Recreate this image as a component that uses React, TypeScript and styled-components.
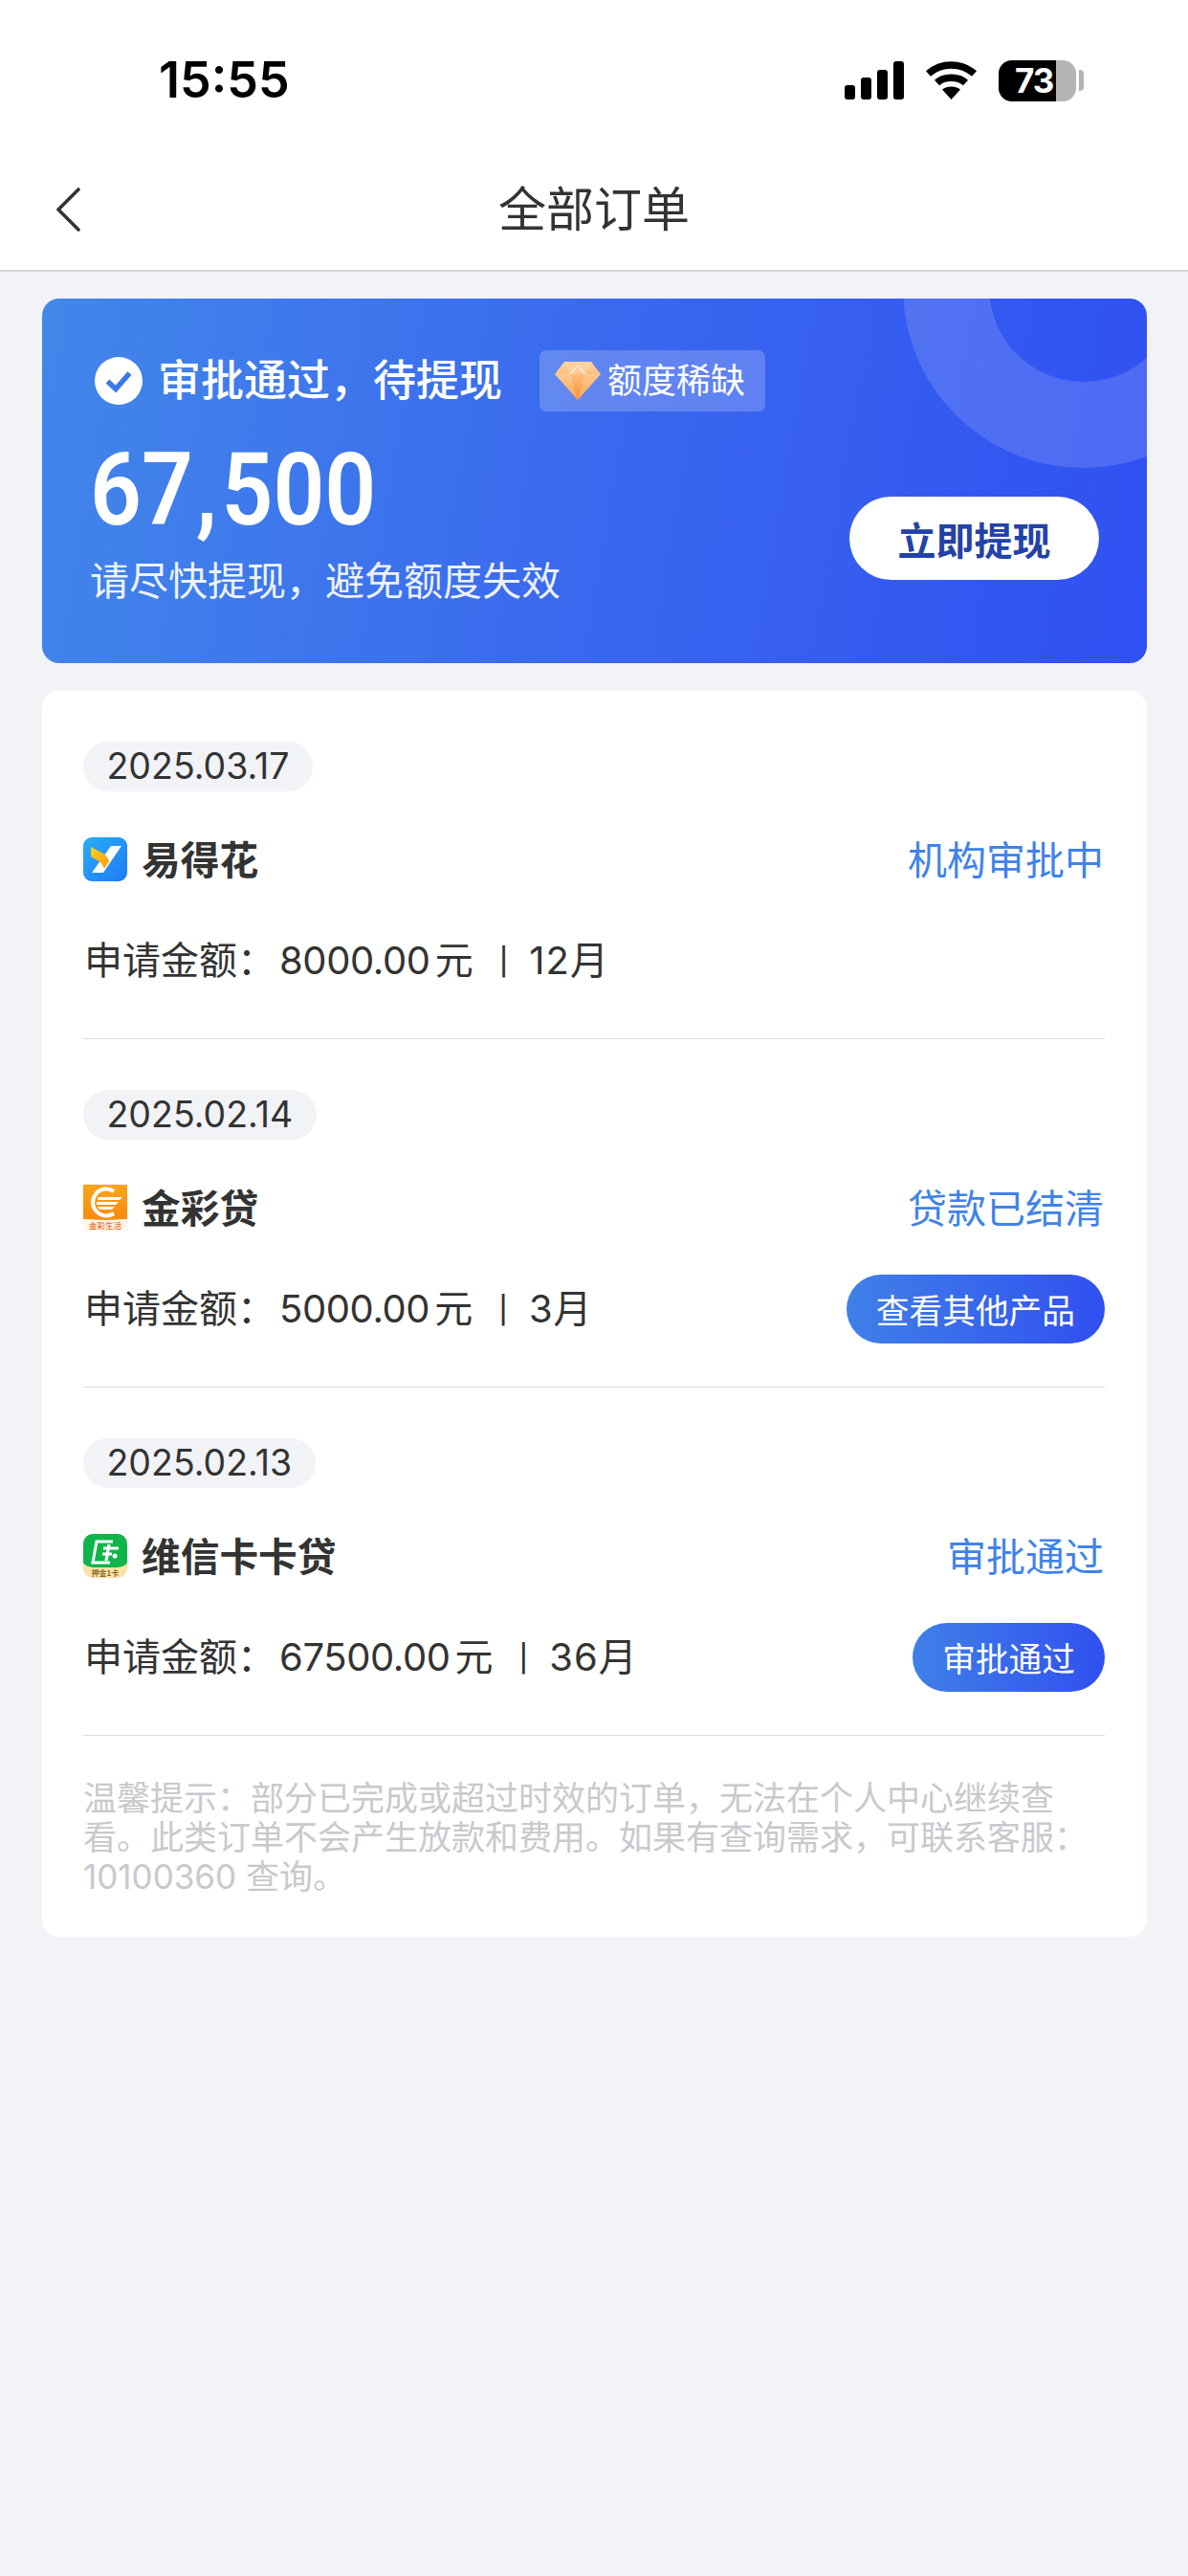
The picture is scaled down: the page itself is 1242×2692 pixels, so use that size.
import React from 'react';
import styled, { createGlobalStyle } from 'styled-components';

const Global = createGlobalStyle`
  html, body { margin: 0; padding: 0; background: #f2f3f7; }
  * { box-sizing: border-box; }
  body { font-family: Inter, "Noto Sans CJK SC", "Noto Sans", sans-serif; color: #333; }
`;

const Page = styled.div`
  width: 1242px;
  min-height: 2692px;
  background: #f2f3f7;
  overflow: hidden;
`;
const Top = styled.header`
  background: #fff;
  border-bottom: 2px solid #d4d4d6;
  height: 284px;
`;
const StatusBar = styled.div`
  height: 168px;
  display: flex;
  align-items: center;
  justify-content: space-between;
  padding: 0 109px 0 166px;
`;
const Time = styled.div`
  font-family: Inter, "Liberation Sans", sans-serif;
  font-weight: 600;
  font-size: 52px;
  line-height: 60px;
  color: #000;
`;
const StatusIcons = styled.div`
  display: flex;
  align-items: center;
  gap: 22px;
`;
const BatteryWrap = styled.div`
  display: flex;
  align-items: center;
  gap: 3px;
`;
const BatteryBody = styled.div`
  width: 81px;
  height: 43px;
  border-radius: 14px;
  background: linear-gradient(90deg, #000 74%, #b4b4b4 74%);
  color: #fff;
  font-family: Inter, "Liberation Sans", sans-serif;
  font-weight: 700;
  font-size: 35px;
  line-height: 43px;
  padding-left: 17px;
  letter-spacing: -1px;
`;
const BatteryCap = styled.div`
  width: 5px;
  height: 22px;
  border-radius: 0 4px 4px 0;
  background: #b4b4b4;
`;
const Nav = styled.nav`
  height: 114px;
  padding: 0 59px 12px;
  display: grid;
  grid-template-columns: 1fr auto 1fr;
  align-items: center;
`;
const NavTitle = styled.h1`
  margin: 0;
  font-size: 50px;
  line-height: 60px;
  font-weight: 400;
  color: #333;
`;
const Hero = styled.section`
  position: relative;
  margin: 28px 43px 0 44px;
  height: 381px;
  border-radius: 18px;
  overflow: hidden;
  background: linear-gradient(100deg, #4287ea 0%, #3a68ee 50%, #2f50f2 100%);
  display: flex;
  justify-content: space-between;
`;
const Ring = styled.div`
  position: absolute;
  width: 378px;
  height: 378px;
  top: -201px;
  right: -123px;
  border-radius: 50%;
  border: 90px solid rgba(255, 255, 255, 0.14);
`;
const HeroLeft = styled.div`
  position: relative;
  padding: 54px 0 0 50px;
`;
const HeroHead = styled.div`
  display: flex;
  align-items: center;
  margin-left: 5px;
  height: 64px;
`;
const HeroTitle = styled.div`
  margin-left: 16px;
  font-size: 45px;
  line-height: 60px;
  font-weight: 500;
  color: #fff;
`;
const Tag = styled.div`
  margin-left: 39px;
  height: 64px;
  padding: 0 21px 0 16px;
  border-radius: 7px;
  background: rgba(255, 255, 255, 0.2);
  display: flex;
  align-items: center;
  gap: 7px;
  color: #fff;
  font-size: 36px;
  line-height: 64px;
`;
const Amount = styled.div`
  margin-top: 33px;
  font-family: Roboto, "Liberation Sans", sans-serif;
  font-weight: 600;
  font-size: 105px;
  line-height: 100px;
  color: #fff;
  transform: scaleX(0.9);
  transform-origin: left center;
  white-space: nowrap;
`;
const AmountComma = styled.span`
  margin: 0 5px 0 3px;
`;
const HeroSub = styled.div`
  margin-top: 16px;
  font-size: 41px;
  line-height: 56px;
  color: rgba(255, 255, 255, 0.92);
`;
const Withdraw = styled.button`
  position: relative;
  align-self: flex-end;
  margin: 0 50px 87px 0;
  width: 261px;
  height: 87px;
  border: 0;
  border-radius: 44px;
  background: #fff;
  color: #2342a6;
  font-family: inherit;
  font-size: 40px;
  font-weight: 700;
  padding: 0;
`;
const Card = styled.section`
  margin: 29px 43px 0 44px;
  padding: 0 44px 42px 43px;
  background: #fff;
  border-radius: 18px;
`;
const Order = styled.article`
  padding: 53px 0 45px;
  border-bottom: 1px solid #dcdcdf;
`;
const DateChip = styled.div`
  display: inline-flex;
  align-items: center;
  height: 52px;
  padding: 0 24.5px 2px;
  border-radius: 26px;
  background: #f2f3f7;
  font-size: 37.5px;
  color: #333;
  vertical-align: top;
`;
const OrderHead = styled.div`
  margin-top: 41px;
  height: 60px;
  display: flex;
  align-items: center;
  justify-content: space-between;
`;
const Product = styled.div`
  display: flex;
  align-items: center;
  gap: 15px;
`;
const ProductName = styled.span`
  padding-bottom: 4px;
  font-size: 40.7px;
  font-weight: 700;
  color: #333;
`;
const OrderStatus = styled.div`
  padding: 0 1px 4px 0;
  font-size: 41px;
  color: #4083e9;
`;
const OrderBody = styled.div`
  margin-top: 40px;
  height: 72px;
  display: flex;
  align-items: center;
  justify-content: space-between;
`;
const Apply = styled.div`
  padding: 0 0 6px 1px;
  font-size: 40px;
  color: #333;
  white-space: pre;
`;
const Money = styled.span`
  margin-left: 4px;
  letter-spacing: -0.4px;
`;
const Unit = styled.span`
  margin-left: 5px;
`;
const Sep = styled.span`
  margin: 0 22px 0 27px;
  font-size: 28px;
  font-weight: 500;
  vertical-align: 3px;
`;
const Term = styled.span`
  letter-spacing: 1px;
`;
const ActionBtn = styled.button`
  height: 72px;
  padding: 0 31px;
  border: 0;
  border-radius: 36px;
  background: linear-gradient(90deg, #4080e8 0%, #3050f0 100%);
  color: #fff;
  font-family: inherit;
  font-size: 34.7px;
  white-space: nowrap;
`;
const Note = styled.p`
  margin: 45px 0 0;
  font-size: 35px;
  line-height: 41px;
  color: #c9c9cd;
`;

const Signal = () => (
  <svg width="62" height="40" viewBox="0 0 62 40">
    <rect x="0" y="25" width="11" height="15" rx="3" fill="#000" />
    <rect x="17" y="17" width="11" height="23" rx="3" fill="#000" />
    <rect x="34" y="9" width="11" height="31" rx="3" fill="#000" />
    <rect x="51" y="0" width="11" height="40" rx="3" fill="#000" />
  </svg>
);
const Wifi = () => (
  <svg width="55" height="40" viewBox="0 0 55 40" fill="none" stroke="#000" strokeWidth="7.5">
    <path d="M3.5 13 C17 1 38 1 51.5 13" />
    <path d="M12.5 22.5 C20 15.5 35 15.5 42.5 22.5" />
    <path d="M27.5 40 L18 29.5 C23 25.5 32 25.5 37 29.5 Z" fill="#000" stroke="none" />
  </svg>
);
const Back = () => (
  <svg width="25" height="46" viewBox="0 0 25 46" fill="none" stroke="#333" strokeWidth="3.6" strokeLinecap="round" strokeLinejoin="round">
    <path d="M23 2 L2 23 L23 44" />
  </svg>
);
const Check = () => (
  <svg width="50" height="50" viewBox="0 0 50 50">
    <circle cx="25" cy="25" r="25" fill="#fff" />
    <path d="M13.5 25.5 L22 33.5 L36.5 17" fill="none" stroke="#3d78e8" strokeWidth="5.5" strokeLinejoin="miter" />
  </svg>
);
const Diamond = () => (
  <svg width="48" height="40" viewBox="0 0 48 40">
    <defs>
      <linearGradient id="dia" x1="0" y1="0" x2="0" y2="1">
        <stop offset="0" stopColor="#ffd6a0" />
        <stop offset="1" stopColor="#f98f2f" />
      </linearGradient>
    </defs>
    <path d="M10 0 H38 L48 13 L24 40 L0 13 Z" fill="url(#dia)" />
    <path d="M10 0 L16 13 H32 L38 0 L24 8 Z M0 13 H16 L24 40 Z M48 13 H32 L24 40 Z" fill="#fff" opacity="0.18" />
    <path d="M16 13 L24 4 L32 13" fill="none" stroke="#fff" strokeWidth="1.2" opacity="0.7" />
  </svg>
);
const LogoYi = () => (
  <svg width="46" height="46" viewBox="0 0 46 46">
    <defs>
      <linearGradient id="yi" x1="0" y1="0" x2="1" y2="1">
        <stop offset="0" stopColor="#2bacfb" />
        <stop offset="1" stopColor="#1c7cf4" />
      </linearGradient>
      <linearGradient id="yi2" x1="0" y1="0" x2="1" y2="1">
        <stop offset="0" stopColor="#ffd21f" />
        <stop offset="1" stopColor="#f59a0c" />
      </linearGradient>
    </defs>
    <rect width="46" height="46" rx="9" fill="url(#yi)" />
    <path d="M29 9 H40 L21 37 H9 Z" fill="#fff" />
    <path d="M8 10 C14 14 25 16 27 25 L22 33 C20 25 10 22 8 20 Z" fill="url(#yi2)" />
  </svg>
);
const LogoJin = () => (
  <svg width="46" height="48" viewBox="0 0 46 48">
    <defs>
      <linearGradient id="jin" x1="0" y1="0" x2="0" y2="1">
        <stop offset="0" stopColor="#fca51a" />
        <stop offset="1" stopColor="#f98a10" />
      </linearGradient>
    </defs>
    <path d="M0 0 H46 V36 Q23 38 0 36 Z" fill="url(#jin)" />
    <path d="M0 36 Q23 38 46 36 V48 H0 Z" fill="#fff5e8" />
    <path d="M32 7 A 14 14 0 1 0 32 30" fill="none" stroke="#fff" strokeWidth="4" />
    <path d="M16 13 H41 L38 16 H15 Z M14 18 H37 L34 21 H14 Z M15 23 H33 L30 26 H17 Z" fill="#fff" />
    <text x="23" y="46" textAnchor="middle" fontSize="8.5" fontWeight="500" fill="#ef6a1c" fontFamily="Noto Sans CJK SC, sans-serif">金彩生活</text>
  </svg>
);
const LogoWei = () => (
  <svg width="46" height="46" viewBox="0 0 46 46">
    <rect width="46" height="46" rx="10" fill="#fbe3a8" />
    <path d="M0 10 A10 10 0 0 1 10 0 H36 A10 10 0 0 1 46 10 V30 Q44 34 36 35 H10 Q2 34 0 30 Z" fill="#0fb54b" />
    <path d="M31 8 H14 L10 30 H28" fill="none" stroke="#fff" strokeWidth="3" />
    <path d="M27 11 L24 28 M21 15 H37 M20 21 H30" stroke="#fff" strokeWidth="3.2" fill="none" />
    <circle cx="33" cy="23" r="2.5" fill="#fff" />
    <text x="23" y="44" textAnchor="middle" fontSize="8" fontWeight="700" fill="#8a6a20" fontFamily="Noto Sans CJK SC, sans-serif">押金1卡</text>
  </svg>
);

type OrderData = {
  date: string;
  logo: React.ReactNode;
  name: string;
  status: string;
  money: string;
  term: string;
  action?: string;
};

const orders: OrderData[] = [
  { date: '2025.03.17', logo: <LogoYi />, name: '易得花', status: '机构审批中', money: '8000.00', term: '12月' },
  { date: '2025.02.14', logo: <LogoJin />, name: '金彩贷', status: '贷款已结清', money: '5000.00', term: '3月', action: '查看其他产品' },
  { date: '2025.02.13', logo: <LogoWei />, name: '维信卡卡贷', status: '审批通过', money: '67500.00', term: '36月', action: '审批通过' },
];

export default function App() {
  return (
    <Page>
      <Global />
      <Top>
        <StatusBar>
          <Time>15:55</Time>
          <StatusIcons>
            <Signal />
            <Wifi />
            <BatteryWrap>
              <BatteryBody>73</BatteryBody>
              <BatteryCap />
            </BatteryWrap>
          </StatusIcons>
        </StatusBar>
        <Nav>
          <Back />
          <NavTitle>全部订单</NavTitle>
        </Nav>
      </Top>
      <Hero>
        <Ring />
        <HeroLeft>
          <HeroHead>
            <Check />
            <HeroTitle>审批通过，待提现</HeroTitle>
            <Tag>
              <Diamond />
              额度稀缺
            </Tag>
          </HeroHead>
          <Amount>67<AmountComma>,</AmountComma>500</Amount>
          <HeroSub>请尽快提现，避免额度失效</HeroSub>
        </HeroLeft>
        <Withdraw>立即提现</Withdraw>
      </Hero>
      <Card>
        {orders.map((o) => (
          <Order key={o.date}>
            <DateChip>{o.date}</DateChip>
            <OrderHead>
              <Product>
                {o.logo}
                <ProductName>{o.name}</ProductName>
              </Product>
              <OrderStatus>{o.status}</OrderStatus>
            </OrderHead>
            <OrderBody>
              <Apply>
                申请金额：<Money>{o.money}</Money><Unit>元</Unit><Sep>|</Sep><Term>{o.term}</Term>
              </Apply>
              {o.action && <ActionBtn>{o.action}</ActionBtn>}
            </OrderBody>
          </Order>
        ))}
        <Note>温馨提示：部分已完成或超过时效的订单，无法在个人中心继续查看。此类订单不会产生放款和费用。如果有查询需求，可联系客服：10100360 查询。</Note>
      </Card>
    </Page>
  );
}
